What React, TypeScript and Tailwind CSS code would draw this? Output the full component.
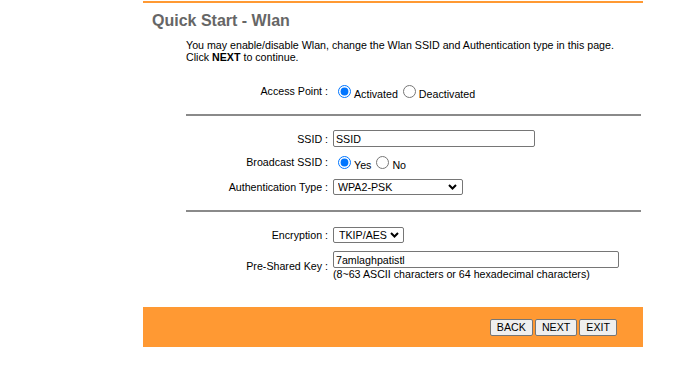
import { useState } from 'react';

const Chevron = () => (
  <svg width="9" height="6" viewBox="0 0 9 6" className="shrink-0">
    <polyline points="1,1 4.5,4.5 8,1" fill="none" stroke="#000" strokeWidth="2" />
  </svg>
);

const Row = ({ label, children, className = '' }: { label: string; children: React.ReactNode; className?: string }) => (
  <div className={`grid grid-cols-[147px_1fr] items-center ${className}`}>
    <div className="pr-[5px] text-right">{label}</div>
    <div>{children}</div>
  </div>
);

export default function App() {
  const [ap, setAp] = useState('on');
  const [broadcast, setBroadcast] = useState('yes');
  const [ssid, setSsid] = useState('SSID');
  const [auth, setAuth] = useState('WPA2-PSK');
  const [enc, setEnc] = useState('TKIP/AES');
  const [psk, setPsk] = useState('7amlaghpatistl');

  const radio = 'm-[3px_3px_0px_5px] h-[13px] w-[13px] accent-[#0075ff] align-baseline';

  return (
    <div className="min-h-screen bg-white font-['Liberation_Sans',Arial,sans-serif] text-[8pt] leading-[normal] text-black">
      <div className="ml-[143px] w-[500px]">
        <div className="mt-[1px] h-[2px] bg-[#ff9933]" />

        <h1 className="mt-[9px] pl-[9px] text-[16px] leading-[18px] font-bold text-[#666666]">Quick Start - Wlan</h1>

        <p className="mt-[9px] pl-[43px]">
          You may enable/disable Wlan, change the Wlan SSID and Authentication type in this page.
          <br />
          Click <b>NEXT</b> to continue.
        </p>

        <div className="ml-[43px] w-[455px]">
          <Row label="Access Point :" className="mt-[19px]">
            <input type="radio" className={radio} checked={ap === 'on'} onChange={() => setAp('on')} />
            Activated
            <input type="radio" className={radio} checked={ap === 'off'} onChange={() => setAp('off')} />
            Deactivated
          </Row>

          <div className="mt-[14px] h-[2px] bg-[#8a8a8a]" />

          <Row label="SSID :" className="mt-[14px]">
            <input
              value={ssid}
              onChange={(e) => setSsid(e.target.value)}
              className="block h-[17px] w-[202px] rounded-[2px] border border-[#767676] px-[2px] outline-none"
            />
          </Row>

          <Row label="Broadcast SSID :" className="mt-[6px]">
            <input type="radio" className={radio} checked={broadcast === 'yes'} onChange={() => setBroadcast('yes')} />
            Yes
            <input type="radio" className={radio} checked={broadcast === 'no'} onChange={() => setBroadcast('no')} />
            No
          </Row>

          <Row label="Authentication Type :" className="mt-[8px]">
            <label className="flex h-[16px] w-[130px] items-center justify-between rounded-[2px] border border-[#767676] pr-[5px] pl-[4px]">
              <select
                value={auth}
                onChange={(e) => setAuth(e.target.value)}
                className="min-w-0 flex-1 appearance-none outline-none"
              >
                <option>WPA2-PSK</option>
                <option>WPA-PSK</option>
                <option>Disabled</option>
              </select>
              <Chevron />
            </label>
          </Row>

          <div className="mt-[15px] h-[2px] bg-[#8a8a8a]" />

          <Row label="Encryption :" className="mt-[15px]">
            <label className="flex h-[16px] w-[71px] items-center justify-between rounded-[2px] border border-[#767676] pr-[4px] pl-[5px]">
              <select
                value={enc}
                onChange={(e) => setEnc(e.target.value)}
                className="min-w-0 flex-1 appearance-none outline-none"
              >
                <option>TKIP/AES</option>
                <option>AES</option>
                <option>TKIP</option>
              </select>
              <Chevron />
            </label>
          </Row>

          <Row label="Pre-Shared Key :" className="mt-[8px]">
            <input
              value={psk}
              onChange={(e) => setPsk(e.target.value)}
              className="block h-[17px] w-[286px] rounded-[2px] border border-[#767676] px-[2px] outline-none"
            />
            <div>(8~63 ASCII characters or 64 hexadecimal characters)</div>
          </Row>
        </div>

        <div className="mt-[27px] flex h-[40px] items-center justify-end gap-[2px] bg-[#ff9933] pr-[26px]">
          <button className="h-[17px] rounded-[2px] border border-[#767676] bg-[#efefef] px-[6px]">BACK</button>
          <button className="h-[17px] rounded-[2px] border border-[#767676] bg-[#efefef] px-[6px]">NEXT</button>
          <button className="h-[17px] rounded-[2px] border border-[#767676] bg-[#efefef] px-[6px]">EXIT</button>
        </div>
      </div>
    </div>
  );
}
